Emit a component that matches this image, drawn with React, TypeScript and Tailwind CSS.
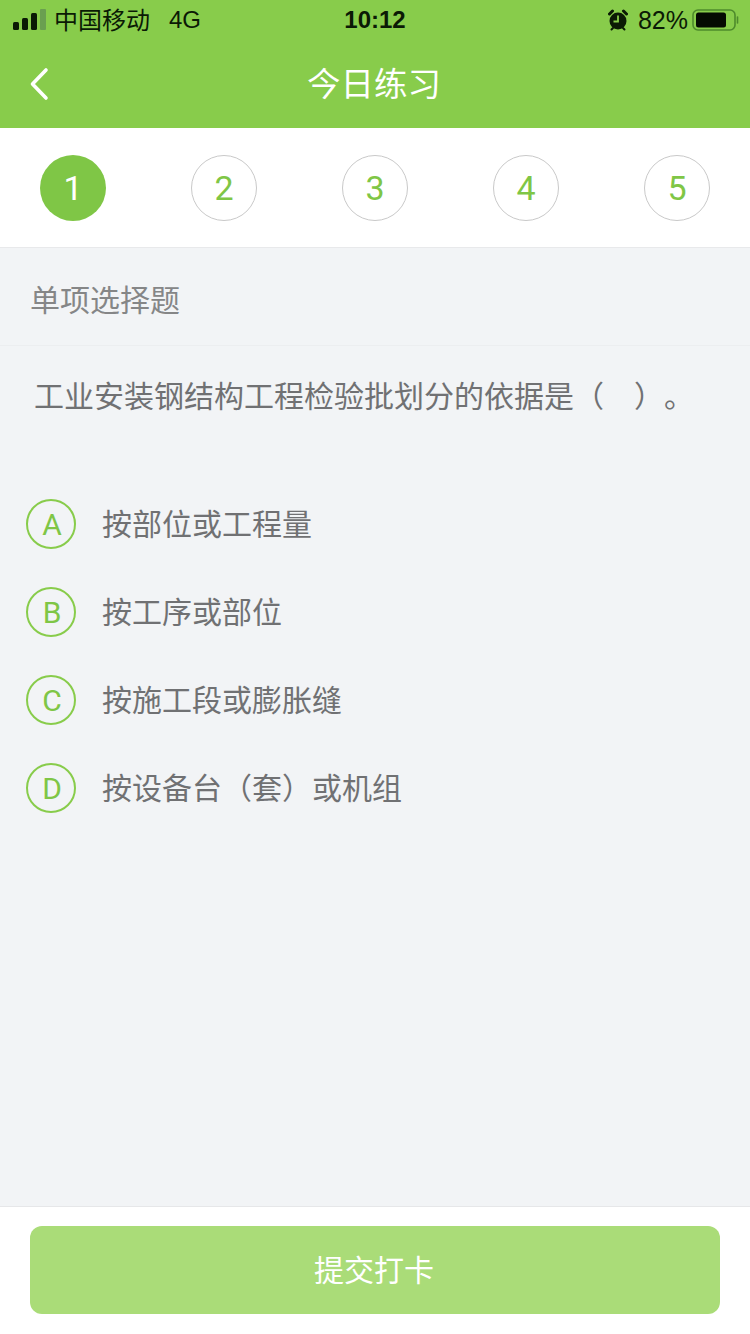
const font = { fontFamily: '"Noto Sans CJK SC", sans-serif' };
const latin = { fontFamily: '"Liberation Sans", sans-serif' };
const thin = { fontFamily: 'Roboto, "Liberation Sans", sans-serif' };

const steps = [1, 2, 3, 4, 5];

const options = [
  { key: 'A', text: '按部位或工程量' },
  { key: 'B', text: '按工序或部位' },
  { key: 'C', text: '按施工段或膨胀缝' },
  { key: 'D', text: '按设备台（套）或机组' },
];

function SignalBars() {
  return (
    <svg width="33" height="22" viewBox="0 0 33 22" className="shrink-0">
      <rect x="0" y="13" width="6" height="8" rx="1.5" fill="#0b1a05" />
      <rect x="9" y="9" width="6" height="12" rx="1.5" fill="#0b1a05" />
      <rect x="18" y="4" width="6" height="17" rx="1.5" fill="#0b1a05" />
      <rect x="27" y="0" width="6" height="21" rx="1" fill="#6a9f50" />
    </svg>
  );
}

function AlarmIcon() {
  return (
    <svg width="20" height="22" viewBox="0 0 20 22" className="shrink-0">
      <circle cx="10" cy="12" r="8.5" fill="#0b1a05" />
      <path d="M1.5 5 L4.5 2 M18.5 5 L15.5 2" stroke="#0b1a05" strokeWidth="3" strokeLinecap="round" />
      <path d="M3.5 20.5 L5 19 M16.5 20.5 L15 19" stroke="#0b1a05" strokeWidth="2" strokeLinecap="round" />
      <path d="M10 6.5 V12.5 H5.5" stroke="#88cc4b" strokeWidth="1.8" fill="none" />
    </svg>
  );
}

function Battery() {
  return (
    <svg width="47" height="22" viewBox="0 0 47 22" className="shrink-0">
      <rect x="1" y="1" width="42" height="20" rx="5" fill="none" stroke="#4e8a2c" strokeWidth="1.6" />
      <rect x="4" y="3.5" width="30" height="15" rx="2.5" fill="#050a02" />
      <path d="M45.5 8 V14" stroke="#4e8a2c" strokeWidth="1.6" strokeLinecap="round" />
    </svg>
  );
}

export default function App() {
  return (
    <div className="h-[1334px] w-[750px] flex flex-col bg-[#f2f4f6] overflow-hidden" style={font}>
      <div className="bg-[#88cc4b] shrink-0">
        <div className="h-10 flex items-center relative text-[#0b1a05] pl-[13px] pr-[11px]">
          <div className="flex items-center gap-[8px]">
            <SignalBars />
            <span className="text-[24px] leading-none -translate-y-px">中国移动</span>
            <span className="text-[24px] leading-none ml-[11px]" style={latin}>4G</span>
          </div>
          <span className="absolute inset-x-0 text-center text-[24px] leading-none font-bold" style={latin}>
            10:12
          </span>
          <div className="ml-auto flex items-center">
            <AlarmIcon />
            <span className="text-[25px] leading-none ml-[10px] mr-[4px]" style={latin}>82%</span>
            <Battery />
          </div>
        </div>
        <div className="h-[88px] flex items-center justify-center relative">
          <svg width="20" height="34" viewBox="0 0 20 34" className="absolute left-[29px] top-[27px]">
            <path d="M17 3 L3.5 17 L17 31" fill="none" stroke="#ffffff" strokeWidth="3.6" strokeLinecap="round" strokeLinejoin="round" />
          </svg>
          <h1 className="text-[33.5px] text-white font-normal leading-none pb-[4px] pr-[2px]">今日练习</h1>
        </div>
      </div>

      <div className="h-[120px] shrink-0 bg-white border-b border-[#e8e9eb] flex items-start justify-between px-10 pt-[27px]">
        {steps.map((n) => (
          <div
            key={n}
            className={
              n === 1
                ? 'w-[66px] h-[66px] rounded-full bg-[#7fc646] text-white flex items-center justify-center text-[34px]'
                : 'w-[66px] h-[66px] rounded-full border border-[#c9c9c9] text-[#7fc646] flex items-center justify-center text-[34px]'
            }
            style={thin}
          >
            {n}
          </div>
        ))}
      </div>

      <div className="h-[98px] shrink-0 border-b border-[#eceef0] flex items-center pl-[30px] pt-[4px] text-[30px] text-[#858687]">
        单项选择题
      </div>

      <p className="pl-[34px] pt-[26px] text-[30px] leading-[44px] text-[#707173] whitespace-pre [text-spacing-trim:space-all]">工业安装钢结构工程检验批划分的依据是（　）。</p>

      <div className="flex flex-col pl-[26px] pt-[64px] flex-1">
        {options.map((o) => (
          <div key={o.key} className="h-[88px] flex items-center">
            <div
              className="w-[50px] h-[50px] rounded-full border-2 border-[#88cc4b] text-[#7fc646] flex items-center justify-center text-[30px] pl-[2px] shrink-0"
              style={thin}
            >
              {o.key}
            </div>
            <span className="ml-[26px] text-[30px] text-[#707173] leading-none pb-[4px]">{o.text}</span>
          </div>
        ))}
      </div>

      <div className="h-[128px] shrink-0 bg-white border-t border-[#e6e7e9] px-[30px] pt-[19px]">
        <button className="w-full h-[88px] rounded-[12px] bg-[#aadc78] text-white text-[30px] pb-[4px] pr-[2px]">提交打卡</button>
      </div>
    </div>
  );
}
